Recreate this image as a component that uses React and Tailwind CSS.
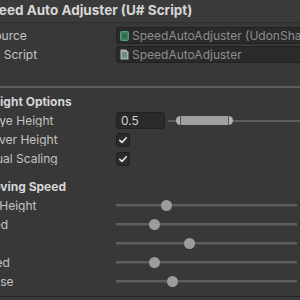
import React from "react";

function Label({ text, offset, bold }) {
  return (
    <div className="w-[116px] shrink-0 overflow-hidden whitespace-nowrap flex">
      <span
        className={"shrink-0 " + (bold ? "font-bold text-[#d6d6d6]" : "")}
        style={{ marginLeft: offset }}
      >
        {text}
      </span>
    </div>
  );
}

function Row({ children, className = "" }) {
  return <div className={"flex h-[19px] items-center " + className}>{children}</div>;
}

function AssetIcon() {
  return (
    <svg width="9" height="10" viewBox="0 0 9 10" className="shrink-0">
      <rect x="0.5" y="0.5" width="8" height="9" rx="1" fill="#3f7f63" stroke="#5a9a7c" />
      <rect x="2.5" y="2.5" width="4" height="5" fill="#2f6a50" />
    </svg>
  );
}

function ScriptIcon() {
  return (
    <svg width="9" height="11" viewBox="0 0 9 11" className="shrink-0">
      <path d="M0.5 0.5 H6 L8.5 3 V10.5 H0.5 Z" fill="#a8aea9" />
      <rect x="2" y="3" width="5" height="6" fill="#6f8a78" />
    </svg>
  );
}

function ObjectField({ icon, text }) {
  return (
    <div className="flex h-[17px] items-center gap-[3px] rounded-[3px] border border-[#212121] bg-[#2a2a2a] pl-[3px] mr-[-40px] whitespace-nowrap overflow-hidden text-[#8e8e8e]">
      {icon}
      <span>{text}</span>
    </div>
  );
}

function Checkbox() {
  return (
    <div className="flex h-[14px] w-[14px] items-center justify-center rounded-[3px] border border-[#1f1f1f] bg-[#2b2b2b]">
      <svg width="10" height="10" viewBox="0 0 10 10">
        <path d="M1.8 5.3 L4 7.4 L8.3 2.8" fill="none" stroke="#e4e4e4" strokeWidth="1.6" strokeLinecap="round" strokeLinejoin="round" />
      </svg>
    </div>
  );
}

function Slider({ pos }) {
  return (
    <div className="relative h-[19px] w-[181px]">
      <div className="absolute left-0 right-0 top-[8px] h-[3px] bg-[#5e5e5e] border-b border-[#4a4a4a]" />
      <div
        className="absolute top-[4px] h-[11px] w-[11px] rounded-full bg-[#9c9c9c]"
        style={{ left: pos - 5.5 }}
      />
    </div>
  );
}

function MinMaxSlider() {
  return (
    <div className="relative h-[17px] flex-1 ml-[3px]">
      <div className="absolute left-0 right-0 top-[7.5px] h-[2px] bg-[#5e5e5e]" />
      <div className="absolute left-[8px] top-[4px] flex h-[9px] w-[57px]">
        <div className="h-full w-[5px] rounded-l-full bg-[#b2b2b2] border-r border-[#555]" />
        <div className="h-full flex-1 bg-[#9f9f9f]" />
        <div className="h-full w-[5px] rounded-r-full bg-[#b2b2b2] border-l border-[#555]" />
      </div>
    </div>
  );
}

export default function App() {
  const sliders = [
    { label: "Reference Height", offset: -62, pos: 50.5 },
    { label: "Walk Speed", offset: -59, pos: 38.7 },
    { label: "Run Speed", offset: -62, pos: 73 },
    { label: "Strafe Speed", offset: -64, pos: 38.7 },
    { label: "Jump Impulse", offset: -66, pos: 56.3 },
  ];
  return (
    <div className="h-[300px] w-[300px] overflow-hidden bg-[#383838] text-[12px] leading-none text-[#c4c4c4] font-['Inter','Noto_Sans',sans-serif]">
      <div className="flex h-[23px] items-center overflow-hidden whitespace-nowrap bg-[#3b3b3b] border-b border-[#2f2f2f]">
        <span className="ml-[-18.5px] shrink-0 font-bold text-[13.5px] text-[#d6d6d6]">
          Speed Auto Adjuster (U# Script)
        </span>
      </div>
      <div className="pt-[3px]">
        <Row>
          <Label text="Program Source" offset={-65} />
          <div className="flex-1 min-w-0">
            <ObjectField icon={<AssetIcon />} text="SpeedAutoAdjuster (UdonSharpProgramAsset)" />
          </div>
        </Row>
        <Row>
          <Label text="Program Script" offset={-48} />
          <div className="flex-1 min-w-0">
            <ObjectField icon={<ScriptIcon />} text="SpeedAutoAdjuster" />
          </div>
        </Row>
      </div>
      <div className="mt-[22px] h-[2px] bg-[#5c5c5c]" />
      <Row className="mt-[4px]">
        <Label text="Height Options" offset={-16} bold />
      </Row>
      <Row>
        <Label text="Default Eye Height" offset={-52} />
        <div className="flex flex-1 items-center">
          <div className="flex h-[17px] w-[49px] shrink-0 items-center rounded-[3px] border border-[#212121] bg-[#2a2a2a] pl-[4px] text-[#d0d0d0]">
            0.5
          </div>
          <MinMaxSlider />
        </div>
      </Row>
      <Row>
        <Label text="Use Server Height" offset={-46} />
        <Checkbox />
      </Row>
      <Row>
        <Label text="Allow Manual Scaling" offset={-63} />
        <Checkbox />
      </Row>
      <Row className="mt-[9px]">
        <Label text="Moving Speed" offset={-18} bold />
      </Row>
      {sliders.map((s) => (
        <Row key={s.label}>
          <Label text={s.label} offset={s.offset} />
          <Slider pos={s.pos} />
        </Row>
      ))}
      <div className="mt-[5px] h-[1px] bg-[#242424]" />
    </div>
  );
}
